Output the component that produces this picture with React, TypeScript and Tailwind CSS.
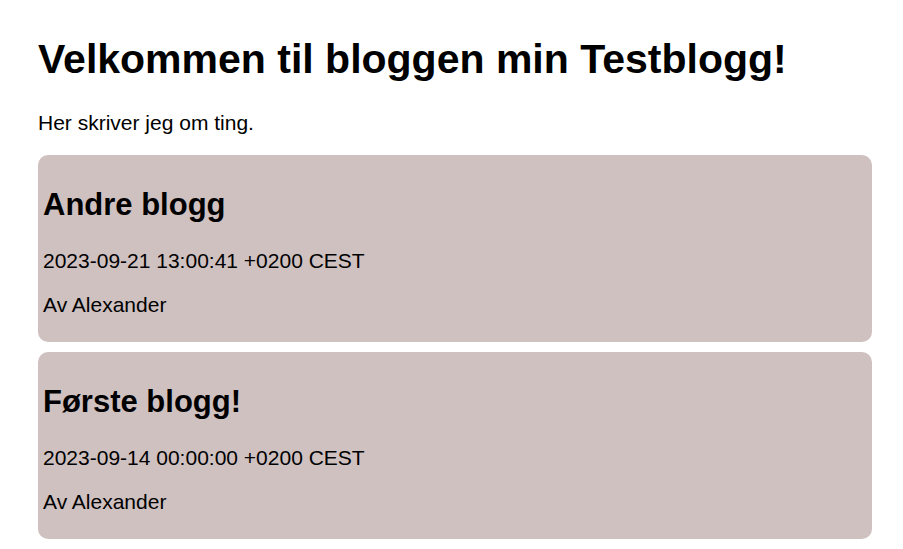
type Post = { title: string; date: string; author: string };

const posts: Post[] = [
  { title: "Andre blogg", date: "2023-09-21 13:00:41 +0200 CEST", author: "Alexander" },
  { title: "Første blogg!", date: "2023-09-14 00:00:00 +0200 CEST", author: "Alexander" },
];

function PostCard({ title, date, author }: Post) {
  return (
    <article className="rounded-[10px] bg-[#cfc1c0] px-[5px] pt-8 pb-[25px]">
      <h2 className="text-[31px] leading-[36px] font-bold">{title}</h2>
      <p className="mt-[26px] leading-6">{date}</p>
      <p className="mt-5 leading-6">Av {author}</p>
    </article>
  );
}

export default function App() {
  return (
    <main className="bg-white pt-[35px] pr-[31px] pb-[10px] pl-[38px] font-['Liberation_Sans',Arial,sans-serif] text-[21px] text-black">
      <h1 className="text-[41px] leading-[48px] font-bold">Velkommen til bloggen min Testblogg!</h1>
      <p className="mt-7 leading-6">Her skriver jeg om ting.</p>
      <div className="mt-5 flex flex-col gap-[10px]">
        {posts.map((post) => (
          <PostCard key={post.date} {...post} />
        ))}
      </div>
    </main>
  );
}
